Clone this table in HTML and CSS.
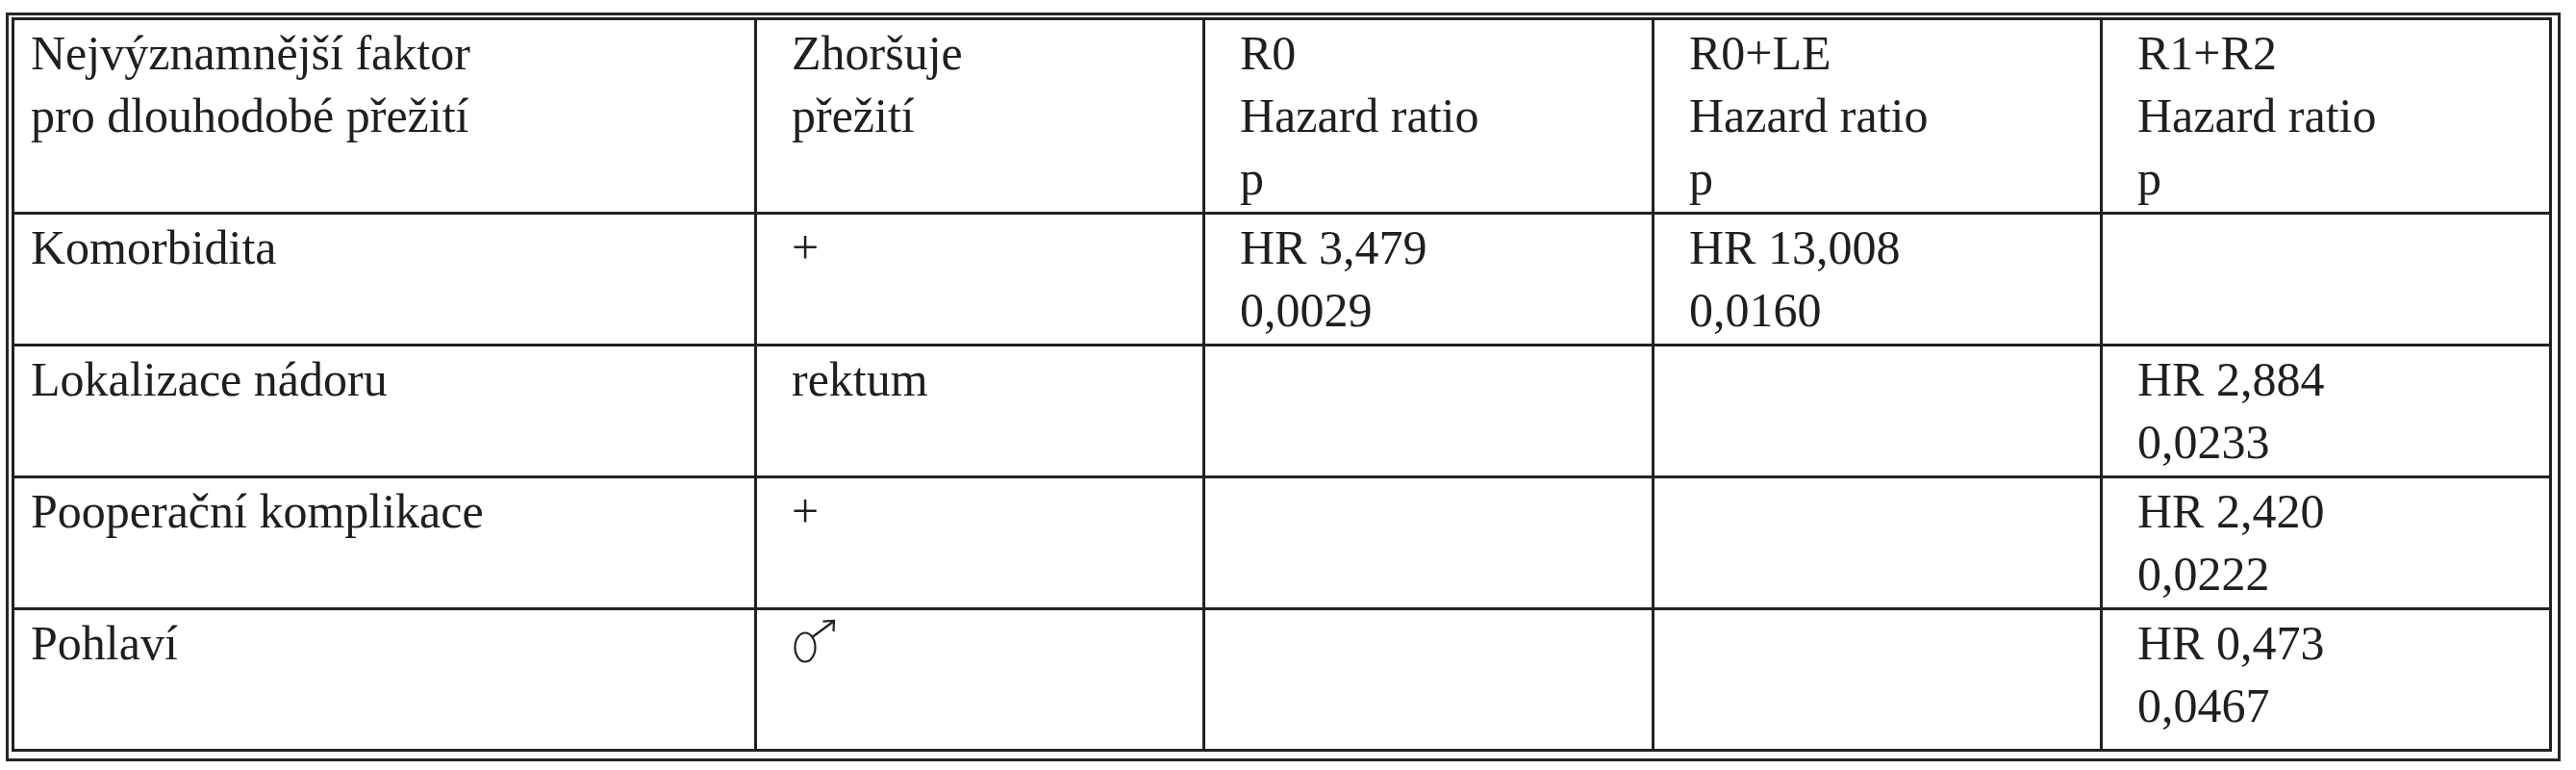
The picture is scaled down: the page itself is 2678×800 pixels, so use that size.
FILE: index.html
```html
<!DOCTYPE html>
<html lang="cs">
<head>
<meta charset="utf-8">
<title>Faktory přežití</title>
<link rel="stylesheet" href="styles.css">
</head>
<body>
<div class="frame">
<table class="data">
<colgroup>
<col class="c1"><col class="c2"><col class="c3"><col class="c4"><col class="c5">
</colgroup>
<tr class="head">
<td class="first">Nejvýznamnější faktor<br>pro dlouhodobé přežití</td>
<td>Zhoršuje<br>přežití</td>
<td>R0<br>Hazard ratio<br>p</td>
<td>R0+LE<br>Hazard ratio<br>p</td>
<td>R1+R2<br>Hazard ratio<br>p</td>
</tr>
<tr>
<td class="first">Komorbidita</td>
<td>+</td>
<td>HR 3,479<br>0,0029</td>
<td>HR 13,008<br>0,0160</td>
<td></td>
</tr>
<tr>
<td class="first">Lokalizace nádoru</td>
<td>rektum</td>
<td></td>
<td></td>
<td>HR 2,884<br>0,0233</td>
</tr>
<tr>
<td class="first">Pooperační komplikace</td>
<td>+</td>
<td></td>
<td></td>
<td>HR 2,420<br>0,0222</td>
</tr>
<tr class="last">
<td class="first">Pohlaví</td>
<td><span class="male" role="img" aria-label="♂"><svg viewBox="0 0 46 46" width="46" height="46"><ellipse cx="13" cy="29.5" rx="10.5" ry="15" fill="none" stroke="#222" stroke-width="2.2"/><path d="M21 18.5 L42 3" fill="none" stroke="#222" stroke-width="2.2"/><path d="M31.5 2.6 L43 2 L42.5 13" fill="none" stroke="#222" stroke-width="2.2"/></svg></span></td>
<td></td>
<td></td>
<td>HR 0,473<br>0,0467</td>
</tr>
</table>
</div>
</body>
</html>
```

FILE: styles.css
```css
html, body {
  margin: 0;
  padding: 0;
  background: #ffffff;
}

body {
  font-family: "Liberation Serif", "DejaVu Serif", serif;
  color: #1f1f1f;
}

.frame {
  box-sizing: border-box;
  width: 2656px;
  margin: 13px 0 0 6px;
  border: 3px solid #262626;
  padding: 2px 6px 7px 3px;
}

.data {
  width: 100%;
  border-collapse: collapse;
  table-layout: fixed;
  border: 3px solid #222;
}

.c1 { width: 772px; }
.c2 { width: 466px; }
.c3 { width: 467px; }
.c4 { width: 466px; }
.c5 { width: 467px; }

.data td {
  font-family: "Liberation Serif", "DejaVu Serif", serif;
  border: 3px solid #222;
  vertical-align: top;
  padding: 2px 8px 2px 36px;
  font-size: 50px;
  line-height: 65px;
  height: 130px;
  box-sizing: content-box;
  white-space: nowrap;
}

.data td.first {
  padding-left: 17px;
}

.data .head td {
  height: 195px;
}

.data .last td {
  padding-bottom: 12px;
}

.male {
  display: inline-block;
  vertical-align: top;
  margin-top: 7px;
  margin-left: 1px;
  line-height: 0;
}
```
